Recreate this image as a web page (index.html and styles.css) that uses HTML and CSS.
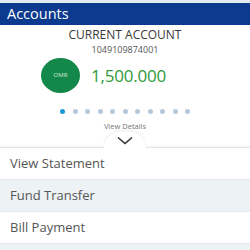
FILE: index.html
```html
<!DOCTYPE html>
<html>
<head>
  <meta charset="UTF-8">
  <link rel="stylesheet" href="styles.css">
</head>
<body>
  <div class="top-strip"></div>
  <div class="header">Accounts</div>

  <section class="account">
    <h2 class="account-title">CURRENT ACCOUNT</h2>
    <p class="account-number">1049109874001</p>
    <div class="balance">
      <div class="currency">OMR</div>
      <div class="amount">1,500.000</div>
    </div>
    <div class="dots">
      <span class="dot active"></span>
      <span class="dot"></span>
      <span class="dot"></span>
      <span class="dot"></span>
      <span class="dot"></span>
      <span class="dot"></span>
      <span class="dot"></span>
      <span class="dot"></span>
      <span class="dot"></span>
      <span class="dot"></span>
      <span class="dot"></span>
    </div>
    <p class="view-details">View Details</p>
    <div class="chevron-tab">
      <svg width="16" height="9" viewBox="0 0 16 9">
        <path d="M1 1.5 L8 7.5 L15 1.5" fill="none" stroke="#333" stroke-width="1.6"/>
      </svg>
    </div>
  </section>

  <ul class="menu">
    <li class="menu-item">View Statement</li>
    <li class="menu-item alt">Fund Transfer</li>
    <li class="menu-item">Bill Payment</li>
    <li class="menu-item alt"></li>
  </ul>
</body>
</html>
```

FILE: styles.css
```css
html,
body {
  margin: 0;
  width: 250px;
  height: 250px;
  overflow: hidden;
  background: #fff;
  font-family: "Open Sans", "Noto Sans", sans-serif;
}

.top-strip {
  height: 3px;
  background: #e3ebf2;
}

.header {
  height: 22px;
  line-height: 22px;
  padding-left: 7px;
  background: #0b3a8e;
  color: #fff;
  font-size: 14.5px;
}

.account {
  text-align: center;
  position: relative;
}

.account-title {
  margin: 2px 0 0;
  font-size: 12px;
  font-weight: 400;
  line-height: 16px;
  color: #3a3a3a;
}

.account-number {
  margin: 1px 0 0;
  font-size: 9px;
  line-height: 12px;
  color: #555;
}

.balance {
  display: flex;
  align-items: center;
  gap: 11px;
  padding-left: 41px;
  margin-top: 2px;
}

.currency {
  width: 39px;
  height: 35px;
  border-radius: 50%;
  background: #13884a;
  color: #d6eadd;
  font-size: 6px;
  line-height: 35px;
}

.amount {
  font-size: 17px;
  color: #2f9b3a;
  letter-spacing: -0.2px;
}

.dots {
  display: flex;
  justify-content: center;
  gap: 7.5px;
  margin-top: 16px;
}

.dot {
  width: 5px;
  height: 5px;
  border-radius: 50%;
  background: #b6c8d9;
}

.dot.active {
  background: #1a98d8;
}

.view-details {
  margin: 7px 0 0;
  font-size: 7.5px;
  line-height: 10px;
  color: #777;
}

.chevron-tab {
  position: relative;
  z-index: 2;
  width: 42px;
  height: 16px;
  margin: 1px auto -1px;
  padding-top: 4px;
  background: #fff;
  border-radius: 21px 21px 0 0;
  box-shadow: 0 -2px 3px rgba(0, 0, 0, 0.06);
  box-sizing: border-box;
}

.chevron-tab svg {
  display: block;
  margin: 0 auto;
}

.menu {
  list-style: none;
  margin: 0;
  padding: 0;
  border-top: 1px solid #e3e6e9;
  box-shadow: 0 -1px 2px rgba(0, 0, 0, 0.05);
}

.menu-item {
  height: 31px;
  line-height: 31px;
  padding-left: 10px;
  font-size: 13px;
  color: #555;
  border-bottom: 1px solid #e3e7ea;
}

.menu-item.alt {
  background: #edf2f5;
}
```
